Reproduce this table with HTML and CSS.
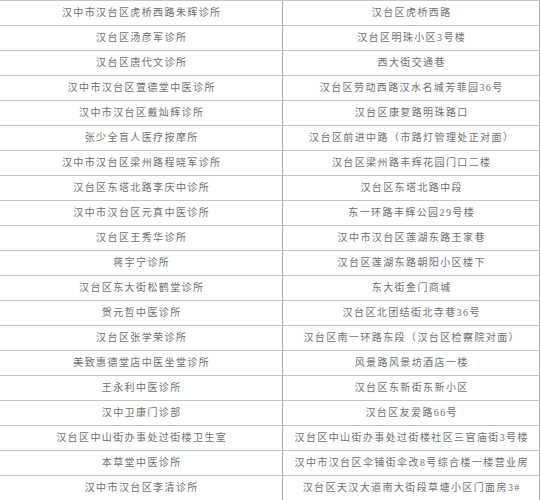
FILE: index.html
```html
<!DOCTYPE html>
<html lang="zh-CN">
<head>
<meta charset="utf-8">
<title>诊所列表</title>
<link rel="stylesheet" href="styles.css">
</head>
<body>
<div class="table">
  <div class="cell name">汉中市汉台区虎桥西路朱辉诊所</div><div class="cell addr">汉台区虎桥西路</div>
  <div class="cell name">汉台区汤彦军诊所</div><div class="cell addr">汉台区明珠小区3号楼</div>
  <div class="cell name">汉台区唐代文诊所</div><div class="cell addr">西大街交通巷</div>
  <div class="cell name">汉中市汉台区萱德堂中医诊所</div><div class="cell addr">汉台区劳动西路汉水名城芳菲园36号</div>
  <div class="cell name">汉中市汉台区戴灿辉诊所</div><div class="cell addr">汉台区康复路明珠路口</div>
  <div class="cell name">张少全盲人医疗按摩所</div><div class="cell addr">汉台区前进中路（市路灯管理处正对面）</div>
  <div class="cell name">汉中市汉台区梁州路程晓军诊所</div><div class="cell addr">汉台区梁州路丰辉花园门口二楼</div>
  <div class="cell name">汉台区东塔北路李庆中诊所</div><div class="cell addr">汉台区东塔北路中段</div>
  <div class="cell name">汉中市汉台区元真中医诊所</div><div class="cell addr">东一环路丰辉公园29号楼</div>
  <div class="cell name">汉台区王秀华诊所</div><div class="cell addr">汉中市汉台区莲湖东路王家巷</div>
  <div class="cell name">蒋宇宁诊所</div><div class="cell addr">汉台区莲湖东路朝阳小区楼下</div>
  <div class="cell name">汉台区东大街松鹤堂诊所</div><div class="cell addr">东大街金门商城</div>
  <div class="cell name">贺元哲中医诊所</div><div class="cell addr">汉台区北团结街北寺巷36号</div>
  <div class="cell name">汉台区张学荣诊所</div><div class="cell addr">汉台区南一环路东段（汉台区检察院对面）</div>
  <div class="cell name">美致惠德堂店中医坐堂诊所</div><div class="cell addr">风景路风景坊酒店一楼</div>
  <div class="cell name">王永利中医诊所</div><div class="cell addr">汉台区东新街东新小区</div>
  <div class="cell name">汉中卫康门诊部</div><div class="cell addr">汉台区友爱路66号</div>
  <div class="cell name">汉台区中山街办事处过街楼卫生室</div><div class="cell addr">汉台区中山街办事处过街楼社区三官庙街3号楼</div>
  <div class="cell name">本草堂中医诊所</div><div class="cell addr">汉中市汉台区伞铺街伞改8号综合楼一楼营业房</div>
  <div class="cell name">汉中市汉台区李清诊所</div><div class="cell addr">汉台区天汉大道南大街段草塘小区门面房3#</div>
</div>
</body>
</html>
```
FILE: styles.css
```css
html, body {
  margin: 0;
  padding: 0;
  background: #ffffff;
}

.table {
  display: grid;
  grid-template-columns: 283px 257px;
  width: 540px;
  border-top: 1px solid #c4c4c4;
  font-family: "Liberation Serif", "Noto Sans CJK SC", serif;
  font-size: 10px;
  color: #6e6e6e;
}

.cell {
  box-sizing: border-box;
  height: 25px;
  border-bottom: 1px solid #c4c4c4;
  display: flex;
  align-items: center;
  justify-content: center;
  letter-spacing: 1.4px;
  padding-left: 1.4px;
  white-space: nowrap;
  line-height: 1;
}

.name {
  border-right: 1px solid #a8a8a8;
}

.addr {
  border-right: 1px solid #a8a8a8;
}
```
